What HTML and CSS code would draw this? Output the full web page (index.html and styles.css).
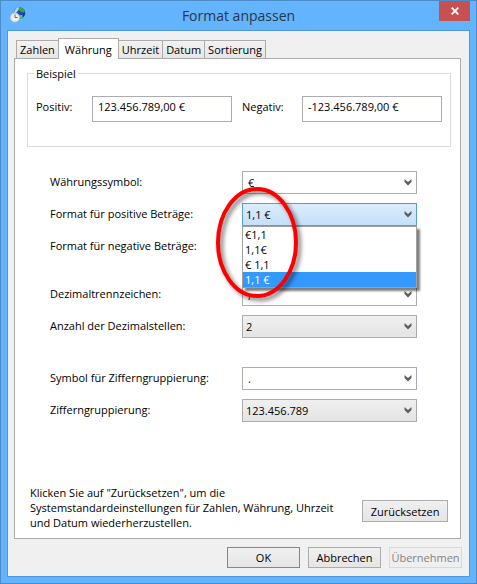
FILE: index.html
```html
<!DOCTYPE html>
<html lang="de">
<head>
    <meta charset="utf-8">
    <title>Format anpassen</title>
    <link rel="stylesheet" href="styles.css">
</head>
<body>
    <svg class="defs" width="0" height="0" aria-hidden="true">
        <symbol id="chevron" viewBox="0 0 8 7">
            <path d="M0.500 0 L4 3 L7.500 0 V3 L4 6.500 L0.500 3 Z" fill="#606060"/>
        </symbol>
    </svg>

    <div class="window">
        <header class="titlebar">
            <svg class="app-icon" width="16" height="16" viewBox="0 0 16 16" aria-hidden="true">
                <circle cx="9.500" cy="6" r="5.800" fill="#1c4fae"/>
                <path d="M4 5 Q5.500 0.500 9.500 0.300 L8.500 3 L7 5 L4.500 7 Z" fill="#a9dcf0"/>
                <path d="M8.500 1.500 L10 0.500 Q13.500 1 15 4.500 L13.500 6 L11 4.500 L9.500 4 Z" fill="#3fa447"/>
                <path d="M12.500 6 L15 5.500 Q15 8 13.500 9.800 L12.500 8.500 Z" fill="#123a8c"/>
                <path d="M9.500 8 L12.500 8 L12.500 10.500 L10 11.800 Z" fill="#62c25c"/>
                <circle cx="5" cy="10.500" r="4.500" fill="#eceeef" stroke="#c0c8ce"/>
                <path d="M5 7.500 V10.500 H7.500" fill="none" stroke="#5c6670"/>
            </svg>
            <h1 class="title">Format anpassen</h1>
            <button class="close-btn" type="button" aria-label="Schließen">
                <svg width="8" height="8" viewBox="0 0 8 8" aria-hidden="true">
                    <path d="M0.700 0.700 L7.300 7.300 M7.300 0.700 L0.700 7.300" stroke="#fff" stroke-width="1.800"/>
                </svg>
            </button>
        </header>

        <main class="client">
            <div class="tabs" role="tablist">
                <button class="tab" type="button" role="tab">Zahlen</button>
                <button class="tab active" type="button" role="tab" aria-selected="true">Währung</button>
                <button class="tab" type="button" role="tab">Uhrzeit</button>
                <button class="tab" type="button" role="tab">Datum</button>
                <button class="tab" type="button" role="tab">Sortierung</button>
            </div>

            <div class="panel" role="tabpanel">
                <fieldset class="example">
                    <legend>Beispiel</legend>
                    <div class="example-row">
                        <label for="positive">Positiv:</label>
                        <input type="text" id="positive" value="123.456.789,00 €" readonly>
                        <label for="negative">Negativ:</label>
                        <input type="text" id="negative" value="-123.456.789,00 €" readonly>
                    </div>
                </fieldset>

                <div class="settings">
                    <div class="row">
                        <label for="symbol">Währungssymbol:</label>
                        <div class="combo editable">
                            <select id="symbol"><option>€</option></select>
                            <svg class="arrow" width="8" height="7"><use href="#chevron"/></svg>
                        </div>
                    </div>
                    <div class="row">
                        <label for="pos-format">Format für positive Beträge:</label>
                        <div class="combo open">
                            <select id="pos-format"><option>1,1 €</option></select>
                            <svg class="arrow" width="8" height="7"><use href="#chevron"/></svg>
                            <ul class="list" role="listbox" aria-label="Format für positive Beträge">
                                <li role="option">€1,1</li>
                                <li role="option">1,1€</li>
                                <li role="option">€ 1,1</li>
                                <li role="option" class="selected" aria-selected="true">1,1 €</li>
                            </ul>
                            <svg class="marker" width="100" height="130" viewBox="0 0 100 130" aria-hidden="true">
                                <ellipse cx="50" cy="65.500" rx="39" ry="53.500" fill="none" stroke="#fe0000" stroke-width="4"/>
                            </svg>
                        </div>
                    </div>
                    <div class="row">
                        <label for="neg-format">Format für negative Beträge:</label>
                        <div class="combo">
                            <select id="neg-format"><option>-1,1 €</option></select>
                            <svg class="arrow" width="8" height="7"><use href="#chevron"/></svg>
                        </div>
                    </div>
                    <div class="row decimals">
                        <label for="decimal">Dezimaltrennzeichen:</label>
                        <div class="combo editable">
                            <select id="decimal"><option>,</option></select>
                            <svg class="arrow" width="8" height="7"><use href="#chevron"/></svg>
                        </div>
                    </div>
                    <div class="row">
                        <label for="digits">Anzahl der Dezimalstellen:</label>
                        <div class="combo">
                            <select id="digits"><option>2</option></select>
                            <svg class="arrow" width="8" height="7"><use href="#chevron"/></svg>
                        </div>
                    </div>
                    <div class="row grouping">
                        <label for="group-symbol">Symbol für Zifferngruppierung:</label>
                        <div class="combo editable">
                            <select id="group-symbol"><option>.</option></select>
                            <svg class="arrow" width="8" height="7"><use href="#chevron"/></svg>
                        </div>
                    </div>
                    <div class="row">
                        <label for="grouping">Zifferngruppierung:</label>
                        <div class="combo">
                            <select id="grouping"><option>123.456.789</option></select>
                            <svg class="arrow" width="8" height="7"><use href="#chevron"/></svg>
                        </div>
                    </div>
                </div>

                <div class="reset">
                    <p>Klicken Sie auf "Zurücksetzen", um die<br>Systemstandardeinstellungen für Zahlen, Währung, Uhrzeit<br>und Datum wiederherzustellen.</p>
                    <button class="btn" type="button">Zurücksetzen</button>
                </div>
            </div>

            <footer class="actions">
                <button class="btn default" type="button">OK</button>
                <button class="btn" type="button">Abbrechen</button>
                <button class="btn" type="button" disabled>Übernehmen</button>
            </footer>
        </main>
    </div>
</body>
</html>
```

FILE: styles.css
```css
* {
    box-sizing: border-box;
}

body {
    margin: 0;
    color: #000;
    font-family: "Open Sans", "Noto Sans", sans-serif;
    font-size: 11px;
    line-height: 15px;
}

button, input, select {
    font: inherit;
    color: inherit;
    margin: 0;
    border-radius: 0;
}

.defs {
    position: absolute;
}

.window {
    display: flex;
    flex-direction: column;
    min-height: 100vh;
    padding: 0 6px 6px;
    background-color: #64b3fd;
    border: 1px solid #4b8cc9;
}

.titlebar {
    display: grid;
    grid-template-columns: 31px 1fr 31px;
    align-items: start;
    height: 29px;
}

.app-icon {
    margin: 6px 0 0 3px;
}

.title {
    margin: 5px 0 0;
    font-size: 14px;
    font-weight: normal;
    line-height: 20px;
    text-align: center;
    color: #24384c;
}

.close-btn {
    display: flex;
    align-items: center;
    justify-content: center;
    height: 20px;
    padding: 0;
    border: none;
    background-color: #c75050;
}

.client {
    display: flex;
    flex: 1;
    flex-direction: column;
    padding: 7px 8px 8px 6px;
    background-color: #f0f0f0;
    border: 1px solid #4f97dd;
}

/* tabs */
.tabs {
    display: flex;
    align-items: flex-end;
    height: 21px;
    padding-left: 2px;
    margin-bottom: -1px;
}

.tab {
    height: 19px;
    padding: 0 3px;
    margin-left: -1px;
    border: 1px solid #acacac;
    background: linear-gradient(#f2f2f2, #e6e6e6);
    line-height: 17px;
}

.tab:first-child {
    margin-left: 0;
}

.tab.active {
    height: 21px;
    padding: 0 6px;
    border-bottom: none;
    background: #fff;
    z-index: 1;
}

.panel {
    display: flex;
    flex: 1;
    flex-direction: column;
    background-color: #fff;
    border: 1px solid #acacac;
}

/* example box */
.example {
    min-width: 0;
    margin: 7px 9px 0 12px;
    padding: 15px 8px 24px;
    border: 1px solid #dcdcdc;
}

.example legend {
    padding: 0 2px;
    margin-left: -2px;
}

.example-row {
    display: grid;
    grid-template-columns: 46px 1fr 50px 1fr;
    align-items: center;
    column-gap: 10px;
}

.example-row label {
    padding-bottom: 5px;
}

.example-row input {
    width: 100%;
    height: 26px;
    padding: 0 5px 5px;
    border: 1px solid #abadb3;
    outline: none;
    background-color: #fff;
}

/* currency settings */
.settings {
    display: flex;
    flex-direction: column;
    gap: 9px;
    padding: 24px 43px 0 35px;
}

.row {
    display: grid;
    grid-template-columns: 192px 1fr;
    align-items: center;
}

.row label {
    padding-bottom: 2px;
}

.row.decimals {
    margin-top: 16px;
}

.row.grouping {
    margin-top: 20px;
}

.combo {
    display: grid;
    position: relative;
    align-items: center;
    grid-template-columns: 1fr 13px;
}

.combo select {
    grid-area: 1 / 1 / 2 / 3;
    width: 100%;
    height: 23px;
    padding: 0 16px 0 3px;
    border: 1px solid #acacac;
    outline: none;
    background: linear-gradient(#f0f0f0, #e4e4e4);
    appearance: none;
}

.combo .arrow {
    grid-area: 1 / 2;
    pointer-events: none;
}

.combo.editable select {
    padding-left: 5px;
    background: #fff;
    border-color: #abadb3;
}

.combo.open {
    z-index: 1;
}

.combo.open select {
    border-color: #569de5;
    background: linear-gradient(#dcecfc, #c4e0fa);
}

.list {
    position: absolute;
    top: 100%;
    left: 0;
    right: 0;
    margin: 0;
    padding: 0;
    list-style: none;
    background-color: #fff;
    border: 1px solid #a0a0a0;
    box-shadow: 3px 3px 2px rgba(0, 0, 0, 0.5);
}

.list li {
    padding-left: 2px;
}

.list .selected {
    color: #fff;
    background-color: #3399ff;
}

/* red ring over the open list */
.marker {
    position: absolute;
    top: -26px;
    left: -35px;
    filter: drop-shadow(3px 3px 2px rgba(0, 0, 0, 0.5));
    pointer-events: none;
}

/* bottom */
.reset {
    display: flex;
    align-items: flex-end;
    justify-content: space-between;
    margin-top: auto;
    padding: 0 12px 8px 15px;
}

.reset p {
    margin: 0;
}

.reset .btn {
    width: 86px;
    height: 22px;
    margin-bottom: 8px;
}

.actions {
    display: flex;
    justify-content: flex-end;
    gap: 8px;
    margin: 8px -1px 0 0;
}

.btn {
    width: 73px;
    height: 21px;
    padding: 0;
    border: 1px solid #acacac;
    background: linear-gradient(#f0f0f0, #e5e5e5);
    line-height: 19px;
}

.btn.default {
    border-color: #3399ff;
}

.btn:disabled {
    color: #838383;
    border-color: #d9d9d9;
    background: #efefef;
}
```
